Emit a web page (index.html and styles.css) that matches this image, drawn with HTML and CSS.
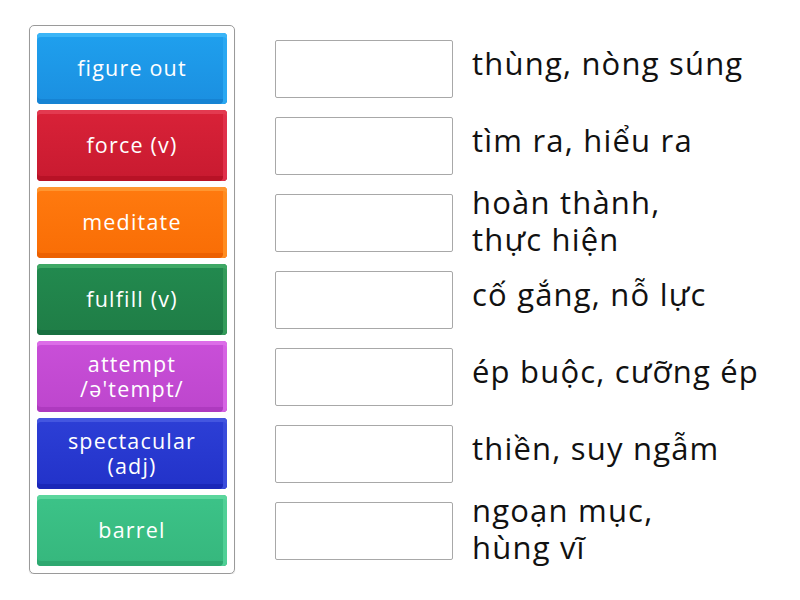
FILE: index.html
```html
<!DOCTYPE html>
<html lang="vi">
<head>
<meta charset="utf-8">
<title>Match up</title>
<link rel="stylesheet" href="styles.css">
</head>
<body>
<div class="page">
  <div class="tray">
    <div class="tile t-blue">figure out</div>
    <div class="tile t-red">force (v)</div>
    <div class="tile t-orange">meditate</div>
    <div class="tile t-green">fulfill (v)</div>
    <div class="tile t-purple">attempt<br>/ə'tempt/</div>
    <div class="tile t-navy">spectacular<br>(adj)</div>
    <div class="tile t-mint">barrel</div>
  </div>
  <div class="targets">
    <div class="row"><div class="slot"></div><div class="def">thùng, nòng súng</div></div>
    <div class="row"><div class="slot"></div><div class="def">tìm ra, hiểu ra</div></div>
    <div class="row"><div class="slot"></div><div class="def two">hoàn thành,<br>thực hiện</div></div>
    <div class="row"><div class="slot"></div><div class="def">cố gắng, nỗ lực</div></div>
    <div class="row"><div class="slot"></div><div class="def">ép buộc, cưỡng ép</div></div>
    <div class="row"><div class="slot"></div><div class="def">thiền, suy ngẫm</div></div>
    <div class="row"><div class="slot"></div><div class="def two">ngoạn mục,<br>hùng vĩ</div></div>
  </div>
</div>
</body>
</html>
```
FILE: styles.css
```css
html, body {
  margin: 0;
  padding: 0;
  background: #ffffff;
}
body {
  font-family: "Open Sans", "Noto Sans", sans-serif;
}
.page {
  display: flex;
  align-items: flex-start;
  padding: 25px 0 0 29px;
  gap: 40px;
}
.tray {
  width: 190px;
  padding: 7px;
  border: 1px solid #9a9a9a;
  border-radius: 5px;
  display: flex;
  flex-direction: column;
  gap: 6px;
  box-shadow: 0 1px 1px rgba(0,0,0,0.15);
}
.tile {
  height: 71px;
  border-radius: 4px;
  display: flex;
  align-items: center;
  justify-content: center;
  text-align: center;
  color: #ffffff;
  font-size: 21.5px;
  letter-spacing: 1.2px;
  line-height: 25px;
  box-sizing: border-box;
  padding-bottom: 2px;
}
.t-blue {
  background: linear-gradient(#1fa0ee, #1b8fe0);
  box-shadow: inset 0 4px 0 #3bb5f7, inset -4px 0 0 #2aa8f2, inset 0 -5px 0 #1683d3;
}
.t-red {
  background: linear-gradient(#d92238, #c81a30);
  box-shadow: inset 0 4px 0 #e33a50, inset -4px 0 0 #e0304a, inset 0 -5px 0 #b81226;
}
.t-orange {
  background: linear-gradient(#ff7a0f, #f96d05);
  box-shadow: inset 0 4px 0 #ff9630, inset -4px 0 0 #ff8c20, inset 0 -5px 0 #ec6000;
}
.t-green {
  background: linear-gradient(#228a4f, #1f7d46);
  box-shadow: inset 0 4px 0 #3fa865, inset -4px 0 0 #349b5a, inset 0 -5px 0 #187040;
}
.t-purple {
  background: linear-gradient(#c94fd8, #bd46cd);
  box-shadow: inset 0 4px 0 #dc6de8, inset -4px 0 0 #d663e3, inset 0 -5px 0 #ae3abf;
}
.t-navy {
  background: linear-gradient(#2d3fd6, #2232c9);
  box-shadow: inset 0 4px 0 #4456e0, inset -4px 0 0 #3a4cdc, inset 0 -5px 0 #1a27b8;
}
.t-mint {
  background: linear-gradient(#3cc388, #36b77d);
  box-shadow: inset 0 4px 0 #5bd69d, inset -4px 0 0 #50d096, inset 0 -5px 0 #2ea870;
}
.targets {
  margin-top: 8px;
  display: flex;
  flex-direction: column;
  gap: 6px;
}
.row {
  height: 71px;
  display: flex;
  align-items: center;
  gap: 19px;
}
.slot {
  width: 176px;
  height: 56px;
  border: 1px solid #a8a8a8;
  border-radius: 2px;
  background: #ffffff;
  flex: none;
}
.def {
  font-size: 31px;
  letter-spacing: 1.2px;
  line-height: 33px;
  color: #111111;
  white-space: nowrap;
  padding-bottom: 10px;
}
.def.two {
  line-height: 37px;
  padding-bottom: 4px;
}
```
